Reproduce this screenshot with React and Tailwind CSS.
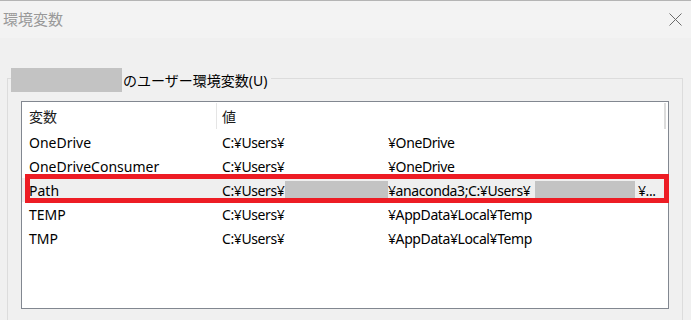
const font = { fontFamily: '"Noto Sans", "Noto Sans CJK JP", sans-serif' };

const rows = [
  { name: 'OneDrive', rest: '¥OneDrive' },
  { name: 'OneDriveConsumer', rest: '¥OneDrive' },
  { name: 'Path', path: true },
  { name: 'TEMP', rest: '¥AppData¥Local¥Temp' },
  { name: 'TMP', rest: '¥AppData¥Local¥Temp' },
];

function Row({ row }) {
  return (
    <div className={`relative flex h-[24px] items-center text-[14px] text-black ${row.path ? 'bg-[#efefef]' : ''}`}>
      <div className="w-[194px] shrink-0 pl-[7px] whitespace-nowrap">{row.name}</div>
      <div className="flex items-center pl-[6px] whitespace-nowrap tracking-[-0.4px]">
        <span className="w-[63px] shrink-0">C:¥Users¥</span>
        {row.path ? (
          <>
            <span className="relative h-[19px] w-[103px] shrink-0 bg-[#c3c3c3]" />
            <span className="w-[147px] shrink-0">¥anaconda3;C:¥Users¥</span>
            <span className="relative h-[19px] w-[100px] shrink-0 bg-[#c3c3c3]" />
            <span className="ml-[3px]">¥...</span>
          </>
        ) : (
          <>
            <span className="w-[103px] shrink-0" />
            <span>{row.rest}</span>
          </>
        )}
      </div>
      {row.path && (
        <div className="pointer-events-none absolute top-[-4px] left-[3px] h-[29px] w-[644px] border-[5px] border-[#ed1c24]" />
      )}
    </div>
  );
}

export default function App() {
  return (
    <div className="h-[320px] w-[691px] overflow-hidden border-t border-[#b4b4b4] bg-[#f0f0f0]" style={font}>
      {/* title bar */}
      <div className="flex h-[37px] items-center justify-between bg-[#f3f3f3] pl-[3px] pr-[9px]">
        <span className="text-[15px] text-[#999999]">環境変数</span>
        <svg width="13" height="13" viewBox="0 0 13 13" className="text-[#6b6b6b]">
          <path d="M0.5 0.5 L12.5 12.5 M12.5 0.5 L0.5 12.5" stroke="currentColor" strokeWidth="1" />
        </svg>
      </div>

      {/* group box */}
      <div className="relative mt-[40px] ml-[7px] h-[260px] w-[676px] border border-b-0 border-[#dcdcdc]">
        <div className="absolute top-[-11px] left-[3px] flex h-[24px] items-center bg-[#f0f0f0] pr-[4px]">
          <span className="h-[24px] w-[111px] bg-[#c3c3c3]" />
          <span className="ml-[1px] text-[14px] text-black">のユーザー環境変数(U)</span>
        </div>

        <div className="mt-[22px] ml-[13px] h-[208px] w-[648px] border border-[#828790] bg-white">
          {/* header */}
          <div className="relative flex h-[28px] items-center text-[14px] text-[#1a1a1a]">
            <div className="flex h-full w-[194px] items-center pl-[7px]">変数</div>
            <div className="h-[26px] w-px bg-[#e5e5e5]" />
            <div className="pl-[5px]">値</div>
            <div className="absolute top-[1px] right-[2px] h-[26px] w-[2px] bg-[#dcdcdc]" />
          </div>
          {rows.map((r) => (
            <Row key={r.name} row={r} />
          ))}
        </div>
      </div>
    </div>
  );
}
